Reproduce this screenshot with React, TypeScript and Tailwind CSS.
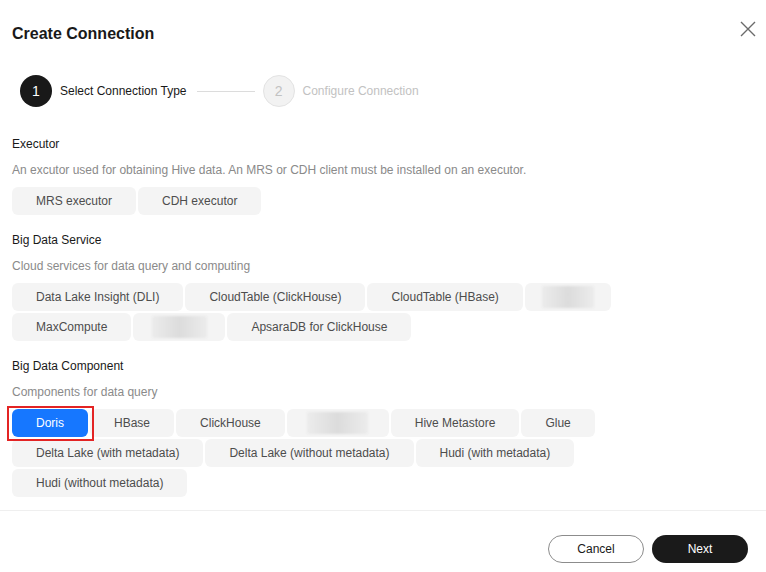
import type { ReactNode } from 'react';

type Item = { label?: string; blur?: number; selected?: boolean };

const sections: { title: string; desc: string; items: Item[] }[] = [
  {
    title: 'Executor',
    desc: 'An excutor used for obtaining Hive data. An MRS or CDH client must be installed on an executor.',
    items: [{ label: 'MRS executor' }, { label: 'CDH executor' }],
  },
  {
    title: 'Big Data Service',
    desc: 'Cloud services for data query and computing',
    items: [
      { label: 'Data Lake Insight (DLI)' },
      { label: 'CloudTable (ClickHouse)' },
      { label: 'CloudTable (HBase)' },
      { blur: 86 },
      { label: 'MaxCompute' },
      { blur: 92 },
      { label: 'ApsaraDB for ClickHouse' },
    ],
  },
  {
    title: 'Big Data Component',
    desc: 'Components for data query',
    items: [
      { label: 'Doris', selected: true },
      { label: 'HBase' },
      { label: 'ClickHouse' },
      { blur: 102 },
      { label: 'Hive Metastore' },
      { label: 'Glue' },
      { label: 'Delta Lake (with metadata)' },
      { label: 'Delta Lake (without metadata)' },
      { label: 'Hudi (with metadata)' },
      { label: 'Hudi (without metadata)' },
    ],
  },
];

function Chip({ item }: { item: Item }) {
  if (item.blur) {
    // redacted entry in the screenshot: grey blurred block inside a chip
    return (
      <div className="h-7 rounded-md bg-[#f4f4f4] flex items-center justify-center" style={{ width: item.blur }}>
        <div className="h-[22px] w-[60%] bg-gradient-to-r from-[#ececec] via-[#dcdcdc] to-[#ececec] blur-[1px]" />
      </div>
    );
  }
  if (item.selected) {
    return (
      <div className="relative">
        <button className="h-7 px-6 rounded-md bg-[#1677ff] text-white text-xs">{item.label}</button>
        <div className="absolute z-10 left-[-5px] right-[-6px] top-[-3px] bottom-[-4px] border-2 border-[#e32424] pointer-events-none" />
      </div>
    );
  }
  return <button className="h-7 px-6 rounded-md bg-[#f4f4f4] text-[#4d4d4d] text-xs whitespace-nowrap">{item.label}</button>;
}

function Step({ n, active, children }: { n: number; active?: boolean; children: ReactNode }) {
  return (
    <div className="flex items-center gap-2">
      <div
        className={
          active
            ? 'w-8 h-8 rounded-full bg-[#191919] text-white text-sm flex items-center justify-center'
            : 'w-8 h-8 rounded-full bg-[#f2f2f2] border border-[#e3e3e3] text-[#c2c2c2] text-sm flex items-center justify-center'
        }
      >
        {n}
      </div>
      <span className={active ? 'text-xs text-[#191919]' : 'text-xs text-[#c2c2c2]'}>{children}</span>
    </div>
  );
}

export default function App() {
  return (
    <div className="w-[766px] h-[572px] bg-white flex flex-col" style={{ fontFamily: '"Liberation Sans", Arial, sans-serif' }}>
      <div className="flex items-start justify-between pl-3 pr-[10px]">
        <h1 className="mt-[22px] text-base leading-6 font-bold text-[#191919]">Create Connection</h1>
        <button className="mt-[21px] w-[16px] h-[16px] text-[#6b6b6b]">
          <svg viewBox="0 0 16 16" width="16" height="16" fill="none" stroke="currentColor" strokeWidth="1.4">
            <path d="M1 1 L15 15 M15 1 L1 15" />
          </svg>
        </button>
      </div>

      <div className="mt-[29px] pl-5 flex items-center">
        <Step n={1} active>Select Connection Type</Step>
        <div className="w-[58px] h-px bg-[#dcdcdc] ml-[10px] mr-2" />
        <Step n={2}>Configure Connection</Step>
      </div>

      <div className="px-3 mt-[28px] flex flex-col gap-4">
        {sections.map((s) => (
          <div key={s.title}>
            <p className="text-xs leading-[18px] text-[#191919]">{s.title}</p>
            <p className="mt-2 text-xs leading-[18px] text-[#8a8a8a]">{s.desc}</p>
            <div className="mt-2 flex flex-wrap gap-[2px] max-w-[600px]">
              {s.items.map((it, i) => (
                <Chip key={i} item={it} />
              ))}
            </div>
          </div>
        ))}
      </div>

      <div className="mt-auto border-t border-[#efefef] h-[62px] flex items-start justify-end gap-2 pr-[18px] pt-[24px]">
        <button className="w-24 h-7 rounded-full border border-[#8c8c8c] text-xs text-[#191919]">Cancel</button>
        <button className="w-24 h-7 rounded-full bg-[#1a1a1a] text-xs text-white">Next</button>
      </div>
    </div>
  );
}
